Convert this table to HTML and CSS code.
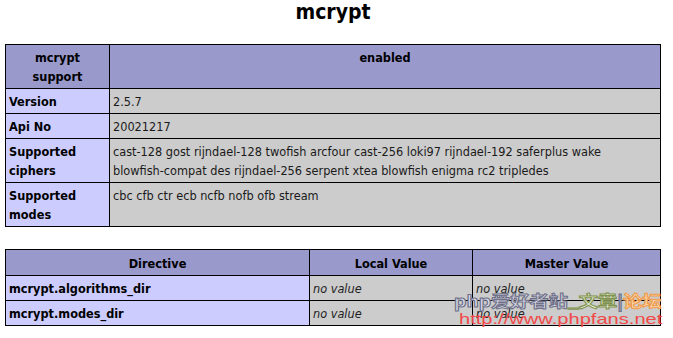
FILE: index.html
```html
<!DOCTYPE html>
<html>
<head>
<meta charset="utf-8">
<link rel="stylesheet" href="styles.css">
</head>
<body>
<div class="page">
  <h2 class="title">mcrypt</h2>
  <table class="info">
    <colgroup><col class="c1"><col></colgroup>
    <tr class="h"><th>mcrypt<br>support</th><th>enabled</th></tr>
    <tr><td class="e">Version</td><td class="v">2.5.7</td></tr>
    <tr><td class="e">Api No</td><td class="v">20021217</td></tr>
    <tr><td class="e">Supported<br>ciphers</td><td class="v">cast-128 gost rijndael-128 twofish arcfour cast-256 loki97 rijndael-192 saferplus wake<br>blowfish-compat des rijndael-256 serpent xtea blowfish enigma rc2 tripledes</td></tr>
    <tr><td class="e">Supported<br>modes</td><td class="v">cbc cfb ctr ecb ncfb nofb ofb stream<br>&nbsp;</td></tr>
  </table>
  <table class="info dir">
    <colgroup><col class="d1"><col class="d2"><col></colgroup>
    <tr class="h"><th>Directive</th><th>Local Value</th><th>Master Value</th></tr>
    <tr><td class="e">mcrypt.algorithms_dir</td><td class="v"><i>no value</i></td><td class="v"><i>no value</i></td></tr>
    <tr><td class="e">mcrypt.modes_dir</td><td class="v"><i>no value</i></td><td class="v"><i>no value</i></td></tr>
  </table>
  <div class="mark">
    <div class="m1"><span class="g">php爱好者站</span><span class="gr">_文章</span><span class="g">|</span><span class="o">论坛</span></div>
    <div class="m2">http://www.phpfans.net</div>
  </div>
</div>
</body>
</html>
```
FILE: styles.css
```css
html, body { margin: 0; padding: 0; background: #fff; }
body { font-family: Tahoma, "DejaVu Sans Condensed", "DejaVu Sans", sans-serif; font-size: 12.6px; color: #000; }
.page { position: relative; width: 656px; margin-left: 5px; padding: 0 0 10px; }
.title { margin: 0 0 20px; text-align: center; font-size: 21px; line-height: 24px; font-weight: bold; font-family: "DejaVu Sans Condensed", "DejaVu Sans", sans-serif; }
.info { width: 656px; border-collapse: collapse; table-layout: fixed; margin: 0; }
.info th, .info td { border: 1px solid #000; padding: 3px 3px 2px; line-height: 19px; vertical-align: baseline; }
.info .c1 { width: 104px; }
.h th { background: #9999cc; font-weight: bold; text-align: center; vertical-align: top; color: #000; }
.e { background: #ccccff; font-weight: bold; text-align: left; }
.v { background: #cccccc; color: #1a1a1a; }
.v i { color: #222; }
.dir { margin-top: 22px; }
.dir .h th { padding-top: 4px; }
.dir .d1 { width: 304px; }
.dir .d2 { width: 163px; }
.mark { position: absolute; left: 449px; top: 290px; pointer-events: none; white-space: nowrap; z-index: 2; }
.m1 { font-family: "Noto Sans CJK SC", "DejaVu Sans", sans-serif; font-weight: bold; font-size: 15.5px; line-height: 20px; transform: scaleX(1.24); transform-origin: left top; -webkit-text-stroke: 1px #6e7088; color: #dcdce8; }
.m1 .gr { -webkit-text-stroke: 1px #7f9250; color: #e2e8cc; }
.m1 .o { -webkit-text-stroke: 1px #f09a48; color: #fcdcb4; }
.m2 { font-family: "Liberation Sans", Arial, sans-serif; font-size: 15px; line-height: 17px; color: #f24848; transform: scaleX(1.34); transform-origin: left top; margin-left: 5px; }
```
